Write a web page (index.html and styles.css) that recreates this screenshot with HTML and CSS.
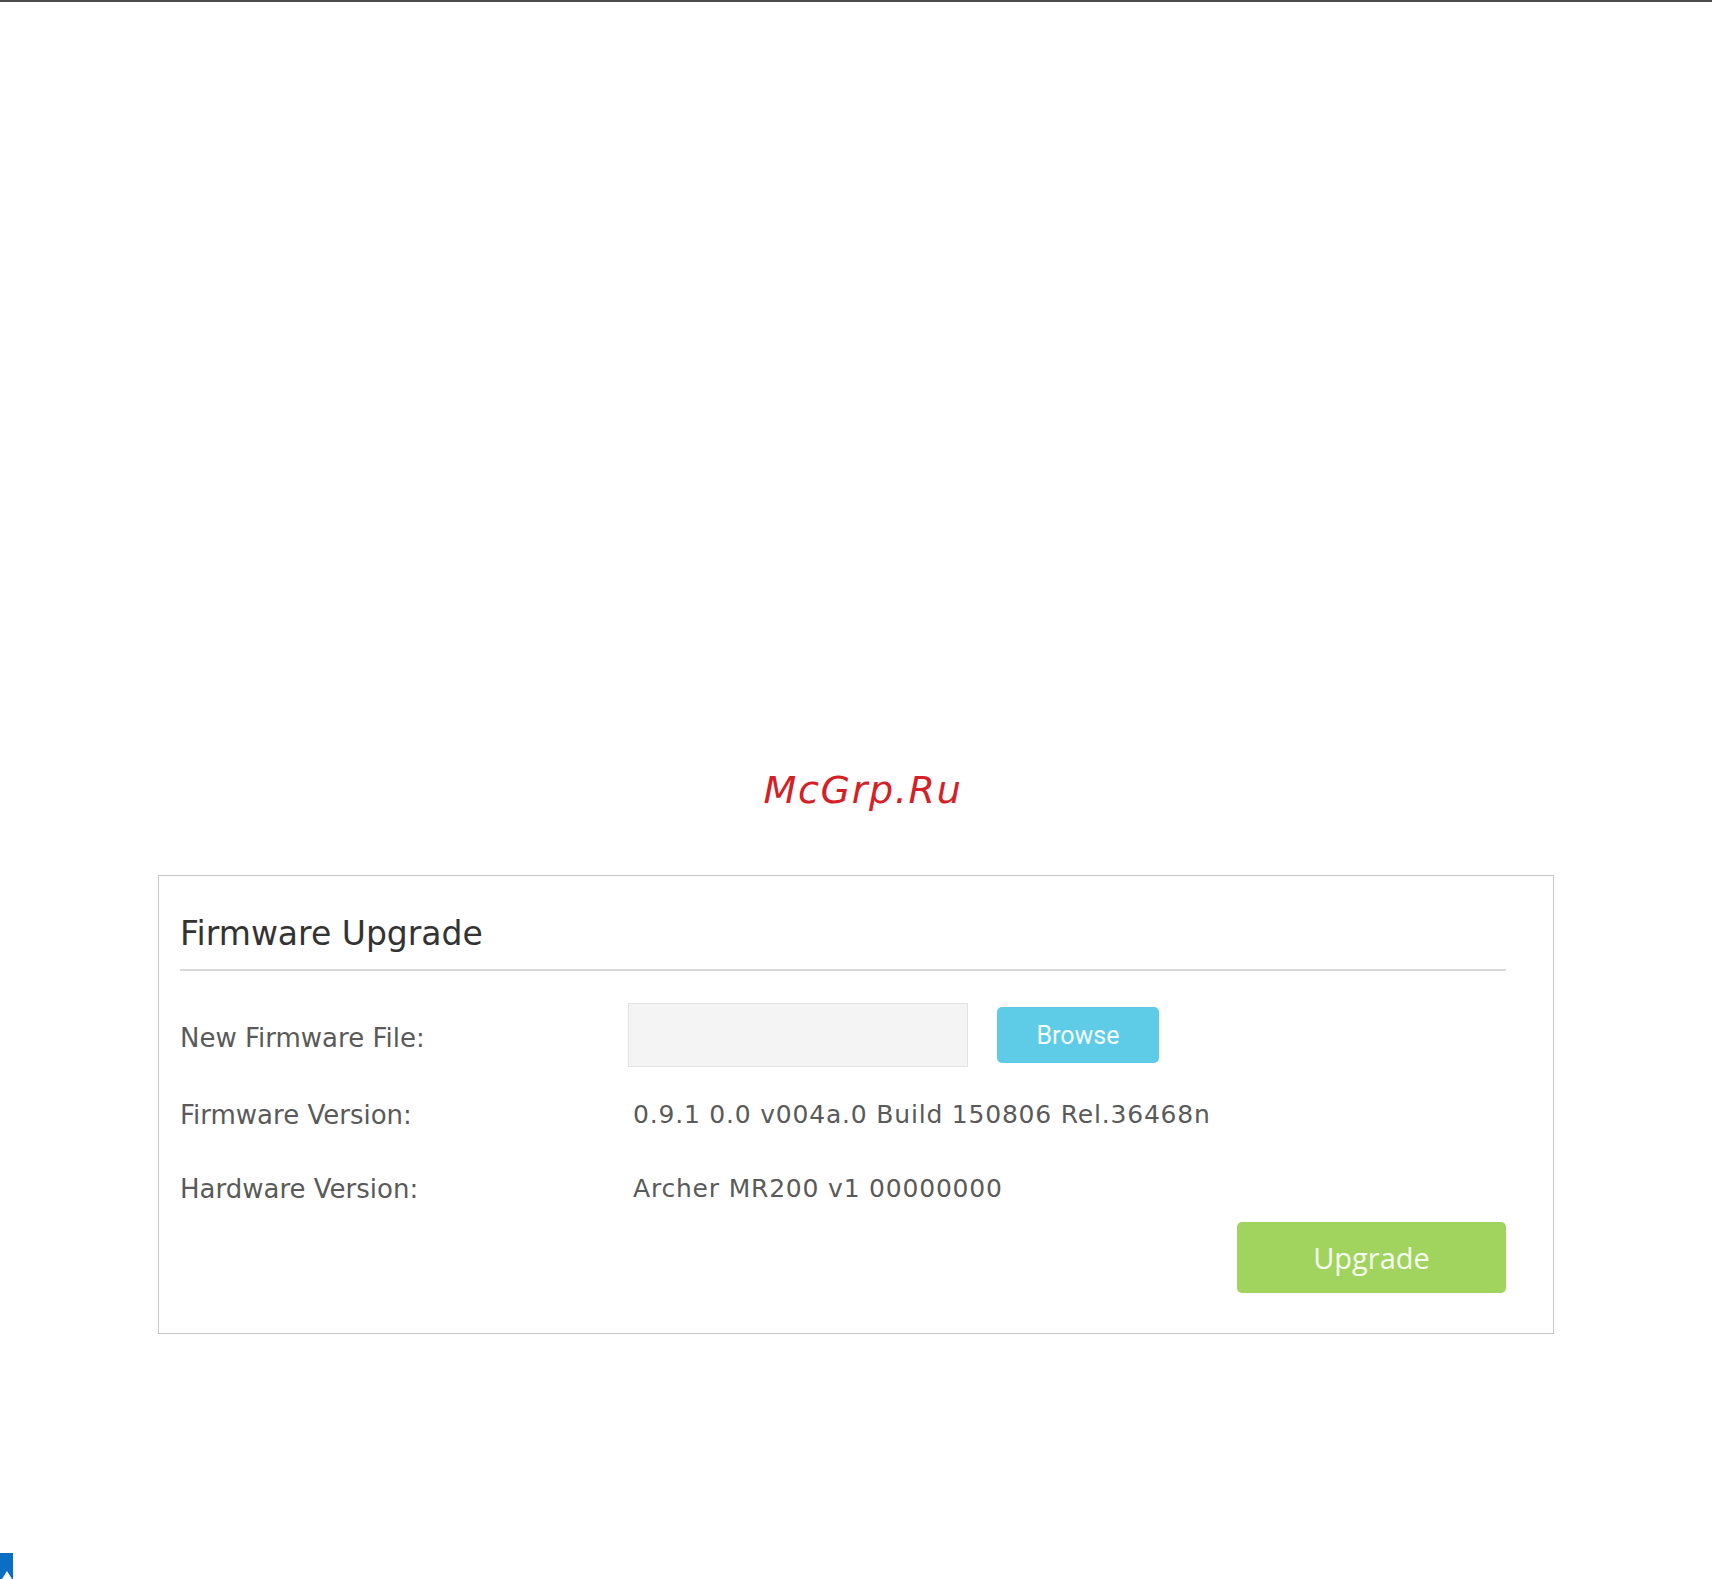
FILE: index.html
```html
<!DOCTYPE html>
<html lang="en">
<head>
<meta charset="utf-8">
<title>Firmware Upgrade</title>
<link rel="stylesheet" href="styles.css">
</head>
<body>
  <div class="topbar"></div>
  <div class="watermark">McGrp.Ru</div>
  <section class="panel">
    <h2 class="panel-title">Firmware Upgrade</h2>
    <div class="row row-file">
      <div class="label label-file">New Firmware File:</div>
      <div class="field">
        <div class="file-input"></div>
        <button class="btn-browse" type="button">Browse</button>
      </div>
    </div>
    <div class="row row-fw">
      <div class="label">Firmware Version:</div>
      <div class="value">0.9.1 0.0 v004a.0 Build 150806 Rel.36468n</div>
    </div>
    <div class="row row-hw">
      <div class="label">Hardware Version:</div>
      <div class="value">Archer MR200 v1 00000000</div>
    </div>
    <div class="actions">
      <button class="btn-upgrade" type="button">Upgrade</button>
    </div>
  </section>
  <div class="corner-mark">
    <svg width="13" height="26" viewBox="0 0 13 26"><polygon points="0,0 13,0 13,26 12,26 7,18 2,26 0,26" fill="#0a6fc2"/></svg>
  </div>
</body>
</html>
```

FILE: styles.css
```css
html, body {
  margin: 0;
  padding: 0;
  background: #ffffff;
}

body {
  min-height: 100vh;
  display: flex;
  flex-direction: column;
  font-family: "DejaVu Sans", Verdana, sans-serif;
  color: #5a5a5a;
}

.topbar {
  height: 2px;
  background: #4d4d4d;
}

.watermark {
  margin-top: 765px;
  height: 46px;
  line-height: 46px;
  text-align: center;
  padding-left: 14px;
  font-family: "DejaVu Sans", sans-serif;
  font-style: oblique;
  font-size: 38px;
  letter-spacing: 1.7px;
  color: #d42026;
}

.panel {
  margin: 62px 0 0 158px;
  width: 1396px;
  box-sizing: border-box;
  border: 1px solid #c6c6c6;
  padding: 38px 47px 40px 21px;
  display: flex;
  flex-direction: column;
}

.panel-title {
  margin: 0;
  font-weight: normal;
  font-size: 33px;
  line-height: 40px;
  color: #333333;
  padding-bottom: 15px;
  border-bottom: 2px solid #d9d9d9;
}

.row {
  display: flex;
  align-items: flex-start;
}

.label {
  width: 448px;
  flex: none;
  font-size: 26px;
  line-height: 30px;
  color: #5a5a5a;
}

.row-file {
  margin-top: 32px;
  height: 64px;
}

.label-file {
  margin-top: 20px;
}

.row-fw {
  margin-top: 33px;
}

.row-hw {
  margin-top: 44px;
}

.value {
  padding-left: 5px;
  font-size: 25px;
  line-height: 30px;
  letter-spacing: 0.8px;
  color: #5a5a5a;
}

.field {
  display: flex;
  align-items: center;
}

.file-input {
  width: 340px;
  height: 64px;
  box-sizing: border-box;
  background: #f4f4f4;
  border: 1px solid #e3e3e3;
}

.btn-browse {
  margin-left: 29px;
  width: 162px;
  height: 56px;
  border: none;
  border-radius: 5px;
  background: #5ecce6;
  color: #f4fcff;
  font-family: Roboto, "Liberation Sans", sans-serif;
  font-size: 25px;
  padding: 0;
}

.actions {
  margin-top: 18px;
  display: flex;
  justify-content: flex-end;
}

.btn-upgrade {
  width: 269px;
  height: 71px;
  border: none;
  border-radius: 5px;
  background: #a1d35f;
  color: #f6fff0;
  font-family: "Open Sans", sans-serif;
  font-size: 29px;
  padding: 0;
}

.corner-mark {
  margin-top: auto;
  height: 26px;
  line-height: 0;
}
```
